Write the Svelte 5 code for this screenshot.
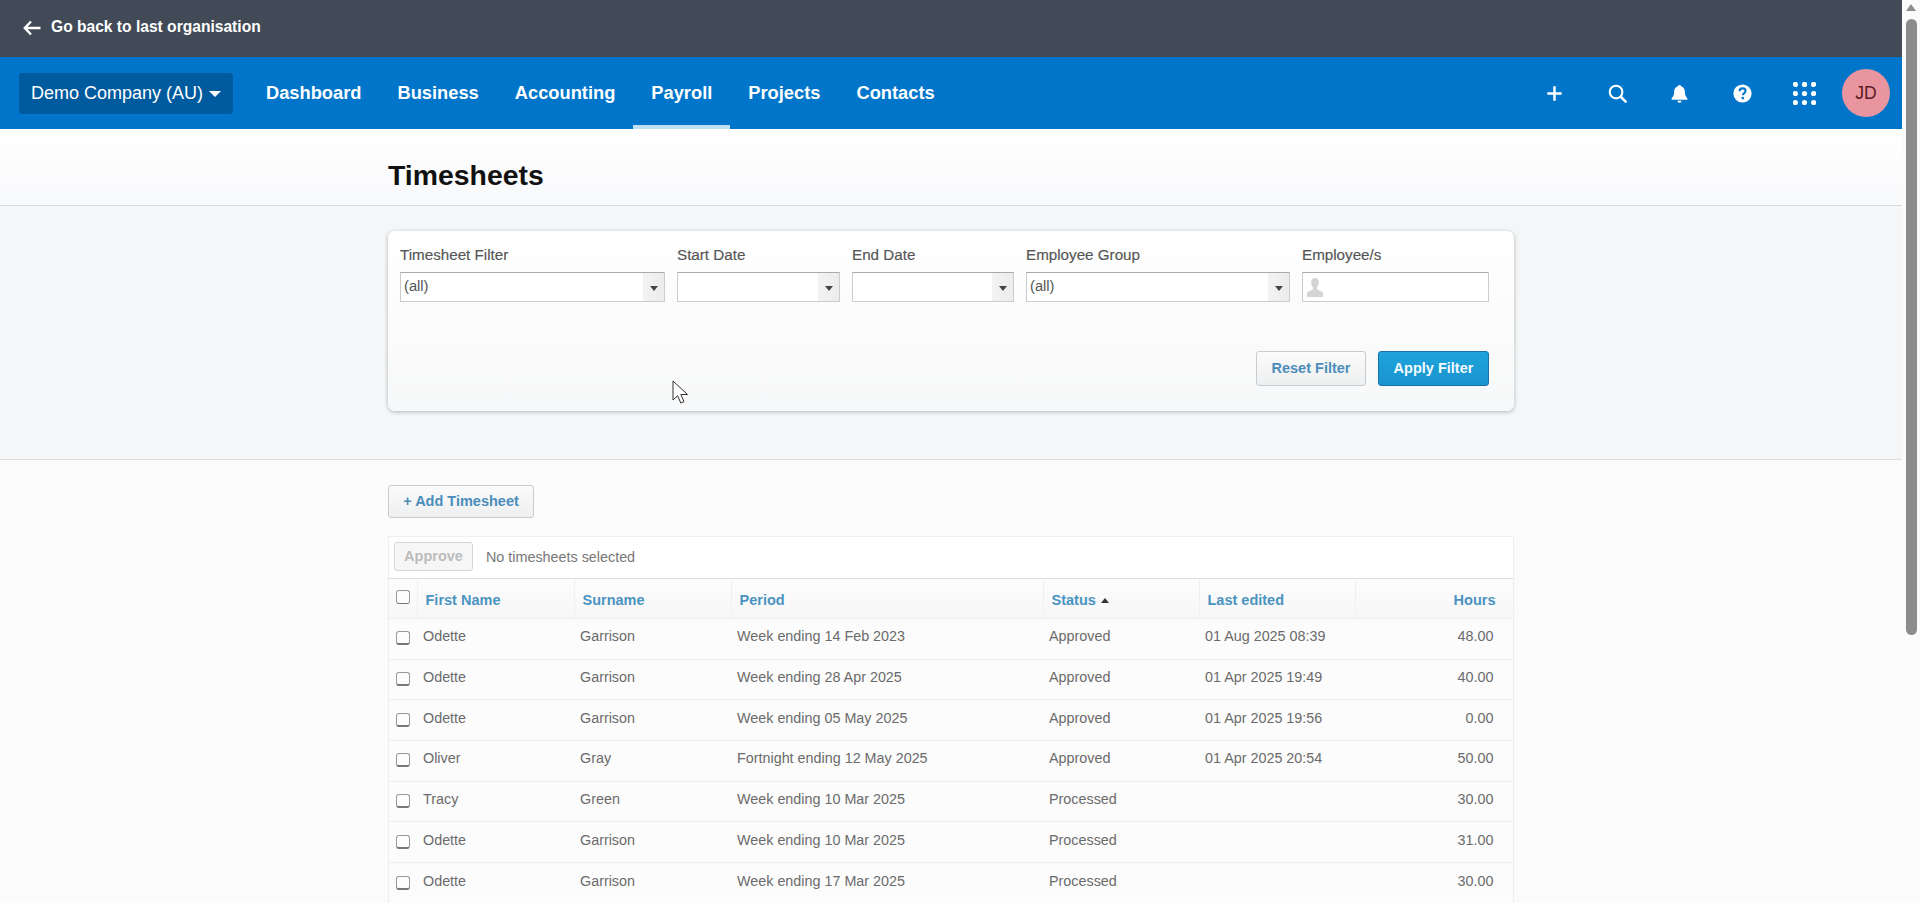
<script lang="ts">
	const navItems = ["Dashboard", "Business", "Accounting", "Payroll", "Projects", "Contacts"];

	const filters = [
		{ label: "Timesheet Filter", value: "(all)", width: 265 },
		{ label: "Start Date", value: "", width: 163 },
		{ label: "End Date", value: "", width: 162 },
		{ label: "Employee Group", value: "(all)", width: 264 },
	];

	const rows = [
		["Odette", "Garrison", "Week ending 14 Feb 2023", "Approved", "01 Aug 2025 08:39", "48.00"],
		["Odette", "Garrison", "Week ending 28 Apr 2025", "Approved", "01 Apr 2025 19:49", "40.00"],
		["Odette", "Garrison", "Week ending 05 May 2025", "Approved", "01 Apr 2025 19:56", "0.00"],
		["Oliver", "Gray", "Fortnight ending 12 May 2025", "Approved", "01 Apr 2025 20:54", "50.00"],
		["Tracy", "Green", "Week ending 10 Mar 2025", "Processed", "", "30.00"],
		["Odette", "Garrison", "Week ending 10 Mar 2025", "Processed", "", "31.00"],
		["Odette", "Garrison", "Week ending 17 Mar 2025", "Processed", "", "30.00"],
	];
</script>

<div class="shell">
	<div class="page">
		<div class="topbar">
			<svg class="back" width="18" height="16" viewBox="0 0 18 16">
				<path d="M8 1.500 1.800 8 8 14.500M2 8h15.500" fill="none" stroke="#fff" stroke-width="2.400" />
			</svg>
			<span>Go back to last organisation</span>
		</div>

		<header class="nav">
			<button class="org">Demo Company (AU)<i class="caret"></i></button>
			<nav class="links">
				{#each navItems as item}
					<span class="link" class:active={item === "Payroll"}>{item}</span>
				{/each}
			</nav>
			<div class="tools">
				<svg class="tool" viewBox="0 0 24 24">
					<path d="M12 4.500v15M4.500 12h15" stroke="#fff" stroke-width="2.600" fill="none" />
				</svg>
				<svg class="tool" viewBox="0 0 24 24">
					<circle cx="10.500" cy="10.500" r="6.600" stroke="#fff" stroke-width="2.200" fill="none" />
					<path d="M15.500 15.500l5 5" stroke="#fff" stroke-width="2.800" stroke-linecap="round" />
				</svg>
				<svg class="tool" viewBox="0 0 24 24">
					<path d="M12 3c.9 0 1.500.6 1.600 1.400 2.600.7 4 2.800 4 5.600 0 4 1 5.300 2.600 7V18.500H3.800V17c1.600-1.700 2.600-3 2.600-7 0-2.800 1.400-4.900 4-5.600C10.500 3.600 11.100 3 12 3z" fill="#fff" />
					<path d="M9.800 19.600h4.400a2.200 2 0 0 1-4.400 0z" fill="#fff" />
				</svg>
				<svg class="tool" viewBox="0 0 24 24">
					<circle cx="12" cy="12" r="9.500" fill="#fff" />
					<path d="M8.900 9.600c.1-2 1.400-3 3.200-3 1.800 0 3.100 1 3.100 2.600 0 2.400-2.700 2.300-2.800 4.700" fill="none" stroke="#0075c9" stroke-width="2.200" />
					<circle cx="12.300" cy="16.800" r="1.400" fill="#0075c9" />
				</svg>
				<svg class="tool" viewBox="0 0 24 24">
					{#each [2.500, 12, 21.500] as cy}
						{#each [2.500, 12, 21.500] as cx}
							<circle {cx} {cy} r="2.700" fill="#fff" />
						{/each}
					{/each}
				</svg>
				<div class="avatar">JD</div>
			</div>
		</header>

		<div class="title-band">
			<h1 class="wrap">Timesheets</h1>
		</div>

		<section class="filter-band">
			<div class="wrap card">
				<div class="fields">
					{#each filters as f}
						<div class="field" style="width:{f.width}px">
							<label for={f.label}>{f.label}</label>
							<div class="select" id={f.label}>
								<span>{f.value}</span>
								<b class="arrow"><i></i></b>
							</div>
						</div>
					{/each}
					<div class="field employees">
						<label for="employees">Employee/s</label>
						<div class="select" id="employees">
							<svg width="18" height="19" viewBox="0 0 18 19">
								<path d="M9 0c2.500 0 3.800 1.800 3.800 4.300 0 2-.7 3.600-1.700 4.600v2.300l5.900 3.300V19H1v-4.500l5.900-3.300V8.900C5.900 7.900 5.200 6.300 5.200 4.300 5.200 1.800 6.500 0 9 0z" fill="#d4d4d4" />
							</svg>
						</div>
					</div>
				</div>
				<div class="actions">
					<button class="btn">Reset Filter</button>
					<button class="btn primary">Apply Filter</button>
				</div>
			</div>
		</section>

		<section class="wrap list">
			<button class="btn add">+ Add Timesheet</button>
			<div class="table-box">
				<div class="bulk">
					<button class="btn approve">Approve</button>
					<span>No timesheets selected</span>
				</div>
				<table>
					<colgroup>
						<col style="width:28px" />
						<col style="width:157px" />
						<col style="width:157px" />
						<col style="width:312px" />
						<col style="width:156px" />
						<col style="width:156px" />
						<col />
					</colgroup>
					<thead>
						<tr>
							<th class="check"><i class="box"></i></th>
							<th>First Name</th>
							<th>Surname</th>
							<th>Period</th>
							<th>Status <i class="sort"></i></th>
							<th>Last edited</th>
							<th class="num">Hours</th>
						</tr>
					</thead>
					<tbody>
						{#each rows as row}
							<tr>
								<td class="check"><i class="box"></i></td>
								{#each row as cell, i}
									<td class:num={i === 5}>{cell}</td>
								{/each}
							</tr>
						{/each}
					</tbody>
				</table>
			</div>
		</section>
	</div>

	<aside class="scrollbar">
		<i class="up"></i>
		<div class="thumb"></div>
	</aside>

	<svg class="cursor" width="17" height="24" viewBox="0 0 17 24">
		<path d="M1 1v19l4.600-4.300 3.200 7.300 3.200-1.400-3.200-7.100H15.500z" fill="#fff" stroke="#333" stroke-width="1" />
	</svg>
</div>

<style>
	:global(body) {
		margin: 0;
		overflow: hidden;
	}
	.shell {
		display: flex;
		height: 903px;
		overflow: hidden;
		font-family: "Liberation Sans", Arial, sans-serif;
		font-size: 14.350px;
		color: #6b6b6b;
		background: #fff;
	}
	.page {
		flex: 1;
		min-width: 0;
		background: #fbfbfb;
	}
	.wrap {
		width: 1126px;
		margin-left: auto;
		margin-right: auto;
		box-sizing: border-box;
	}

	.topbar {
		display: flex;
		align-items: center;
		gap: 10px;
		height: 57px;
		padding: 0 0 4px 23px;
		box-sizing: border-box;
		background: #414a56;
		color: #fff;
		font-size: 15.600px;
		font-weight: bold;
	}
	.back {
		margin-top: 2px;
	}

	.nav {
		display: flex;
		align-items: center;
		height: 72px;
		padding: 0 12px 0 19px;
		background: #0075c9;
		color: #fff;
	}
	.org {
		display: flex;
		align-items: center;
		height: 41px;
		width: 214px;
		padding: 0 0 0 12px;
		border: none;
		border-radius: 3px;
		background: #005a9e;
		color: #fff;
		font: inherit;
		font-size: 18px;
		white-space: nowrap;
	}
	.caret {
		margin: 2px 0 0 6px;
		border: 6px solid transparent;
		border-top-color: #fff;
		border-bottom: none;
	}
	.links {
		display: flex;
		align-self: stretch;
		margin-left: 15px;
		font-size: 18.300px;
		font-weight: bold;
	}
	.link {
		display: flex;
		align-items: center;
		padding: 0 18px;
		box-sizing: border-box;
	}
	.link.active {
		border-bottom: 4px solid #bfdff5;
		padding-top: 4px;
	}
	.tools {
		display: flex;
		align-items: center;
		margin-left: auto;
	}
	.tool {
		width: 23px;
		height: 23px;
		margin-right: 39.500px;
	}
	.tool:nth-child(5) {
		margin-right: 26px;
	}
	.avatar {
		display: flex;
		align-items: center;
		justify-content: center;
		width: 48px;
		height: 48px;
		border-radius: 50%;
		background: #e8959f;
		color: #5b1a22;
		font-size: 17.500px;
	}

	.title-band {
		height: 77px;
		border-bottom: 1px solid #d9dbde;
		box-sizing: border-box;
		background: linear-gradient(#fff, #f8f9fb);
	}
	h1 {
		margin: 0 auto;
		padding: 30px 0 0;
		color: #111;
		font-size: 28.400px;
		font-weight: bold;
		line-height: 33px;
	}

	.filter-band {
		height: 254px;
		padding-top: 25px;
		border-bottom: 1px solid #dcdee1;
		box-sizing: border-box;
		background: #f5f6f8;
	}
	.card {
		height: 180px;
		padding: 15px 12px 0 12px;
		border-radius: 7px;
		background: linear-gradient(#fff, #f7f8f9);
		box-shadow: 0 1px 4px rgb(0 0 0 / 0.28);
	}
	.fields {
		display: flex;
		gap: 12px;
	}
	.field {
		display: flex;
		flex-direction: column;
		gap: 9px;
	}
	.employees {
		width: 187px;
	}
	label {
		color: #555;
		font-size: 15.200px;
		line-height: 17px;
		-webkit-text-stroke: 0.15px #555;
	}
	.select {
		display: flex;
		align-items: center;
		height: 30px;
		padding-left: 3px;
		border: 1px solid #ccc;
		border-top-color: #aaa;
		box-sizing: border-box;
		background: #fff;
		color: #555;
		font-size: 14.700px;
	}
	.select span {
		flex: 1;
		margin-top: -3px;
	}
	.arrow {
		display: flex;
		align-items: center;
		justify-content: center;
		width: 21px;
		height: 100%;
		background: linear-gradient(90deg, #f3f3f3, #ececec);
	}
	.arrow i {
		margin-top: 2px;
		border: 4.500px solid transparent;
		border-top: 5px solid #444;
		border-bottom: none;
	}
	.actions {
		display: flex;
		justify-content: flex-end;
		gap: 12px;
		margin-top: 49px;
		padding-right: 13px;
	}
	.btn {
		height: 35px;
		padding: 0 0 2px;
		border: 1px solid #c9cbce;
		border-radius: 3px;
		background: linear-gradient(#fbfbfb, #eeeff0);
		color: #4a8dbb;
		font: inherit;
		font-size: 14.500px;
		font-weight: bold;
	}
	.actions .btn {
		width: 110px;
	}
	.actions .primary {
		width: 111px;
		border-color: #1b72a8;
		background: linear-gradient(#1ea3da, #1a94cf);
		color: #f3fbff;
	}

	.list {
		padding-top: 25px;
	}
	.add {
		display: block;
		width: 146px;
		height: 33px;
	}
	.table-box {
		margin-top: 18px;
		border-top: 1px solid #eee;
		border-left: 1px solid #eee;
		border-right: 1px solid #eee;
		background: #fff;
	}
	.bulk {
		display: flex;
		align-items: center;
		gap: 13px;
		height: 41px;
		padding: 0 5px 2px;
		box-sizing: border-box;
		color: #777;
	}
	.approve {
		width: 79px;
		height: 29px;
		border-color: #d6d6d6;
		background: #f6f6f6;
		color: #bcbcbc;
	}
	table {
		width: 100%;
		border-collapse: collapse;
		table-layout: fixed;
	}
	th {
		height: 40px;
		padding: 3px 0 0 8px;
		box-sizing: border-box;
		border-top: 1px solid #ddd;
		border-left: 1px solid #f0f0f0;
		background: linear-gradient(#fcfcfc, #f7f7f7);
		color: #4a93c2;
		font-size: 14.500px;
		font-weight: bold;
		text-align: left;
	}
	th:first-child {
		border-left: none;
	}
	td {
		height: 40.700px;
		padding: 0 0 5px 6px;
		box-sizing: border-box;
		border-top: 1px solid #eeeeee;
		background: #fcfcfc;
		color: #6b6b6b;
		white-space: nowrap;
	}
	th.num {
		padding-right: 17.500px;
		text-align: right;
	}
	td.num {
		padding-right: 19.500px;
		text-align: right;
	}
	th.check,
	td.check {
		padding: 0 0 0 7px;
		border-left: none;
	}
	.box {
		display: block;
		width: 14px;
		height: 14px;
		box-sizing: border-box;
		border: 1px solid #999;
		border-bottom: 2px solid #777;
		border-radius: 3px;
		background: #fdfdfd;
	}
	td.check .box {
		margin-bottom: 1px;
	}
	th.check .box {
		margin-top: -3px;
		border-bottom-width: 1px;
	}
	.sort {
		display: inline-block;
		margin-left: 1px;
		vertical-align: 2px;
		border: 4.500px solid transparent;
		border-bottom: 5px solid #333;
		border-top: none;
	}

	.scrollbar {
		position: relative;
		flex: none;
		width: 18px;
		background: #fbfbfb;
	}
	.up {
		position: absolute;
		top: 4px;
		left: 4px;
		border: 5.500px solid transparent;
		border-bottom: 7px solid #8d8d8d;
		border-top: none;
	}
	.thumb {
		position: absolute;
		top: 19px;
		left: 4px;
		width: 11px;
		height: 616px;
		border-radius: 6px;
		background: #8c8c8c;
	}
	.cursor {
		position: absolute;
		left: 672px;
		top: 380px;
	}
</style>
